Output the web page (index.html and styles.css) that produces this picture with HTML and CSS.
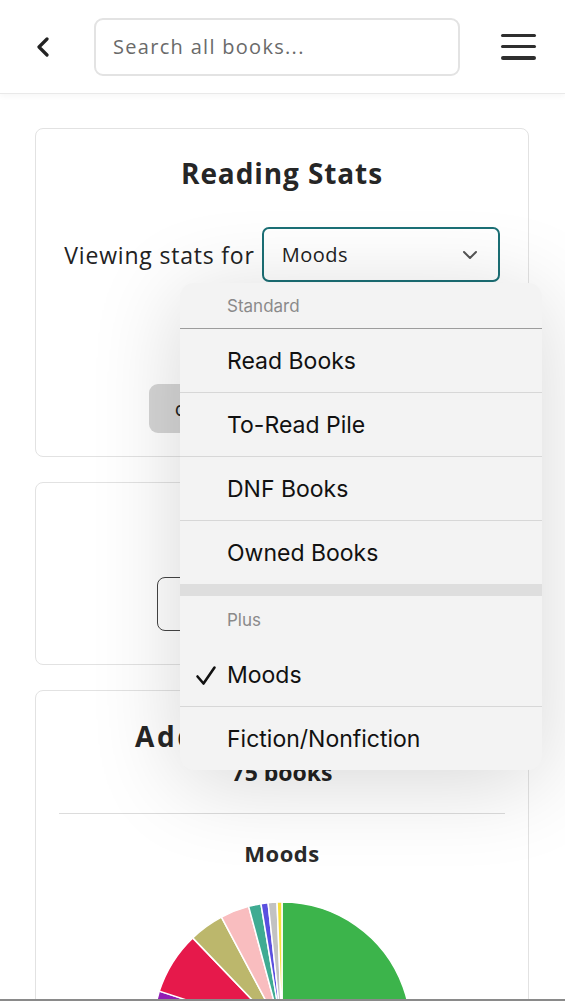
FILE: index.html
```html
<!DOCTYPE html>
<html>
<head>
  <title>Reading Stats</title>
  <link rel="stylesheet" href="styles.css">
</head>
<body>
  <!-- Top bar -->
  <header class="topbar">
    <button class="back-btn" aria-label="Back">
      <svg width="14" height="20" viewBox="0 0 14 20"><path d="M11 2 L3 10 L11 18" fill="none" stroke="#222" stroke-width="3.2" stroke-linecap="round" stroke-linejoin="round"/></svg>
    </button>
    <input type="text" class="search" placeholder="Search all books...">
    <button class="menu-btn" aria-label="Menu">
      <span></span><span></span><span></span>
    </button>
  </header>

  <main class="content">
    <!-- Stats picker -->
    <section class="card card-stats">
      <h1 class="card-title">Reading Stats</h1>
      <div class="viewing-row">
        <span class="viewing-label">Viewing stats for</span>
        <div class="select-box">
          <span>Moods</span>
          <svg width="16" height="10" viewBox="0 0 16 10"><path d="M2 2 L8 8 L14 2" fill="none" stroke="#555" stroke-width="2" stroke-linecap="round" stroke-linejoin="round"/></svg>
        </div>
      </div>
      <button class="gray-btn">compare reading years</button>
    </section>

    <!-- Date range -->
    <section class="card card-range">
      <h2 class="card-subtitle">Date Range</h2>
      <div class="range-box">All time</div>
    </section>

    <!-- Chart -->
    <section class="card card-chart">
      <h2 class="card-title wide">Added Books 2023</h2>
      <p class="book-count">75 books</p>
      <hr class="divider">
      <h3 class="chart-title">Moods</h3>
      <svg class="pie" width="260" height="260" viewBox="0 0 260 260">
        <g stroke="#fff" stroke-width="1.5" stroke-linejoin="round">
          <path d="M130,130 L130,1 A129,129 0 0 1 212.92,228.81 Z" fill="#3cb44b"/>
          <path d="M130,130 L212.92,228.81 A129,129 0 0 1 107.6,257.04 Z" fill="#f58231"/>
          <path d="M130,130 L107.6,257.04 A129,129 0 0 1 31.19,212.92 Z" fill="#42d4f4"/>
          <path d="M130,130 L31.19,212.92 A129,129 0 0 1 1,130 Z" fill="#f032e6"/>
          <path d="M130,130 L1,130 A129,129 0 0 1 7.31,90.14 Z" fill="#911eb4"/>
          <path d="M130,130 L7.31,90.14 A129,129 0 0 1 40.72,36.89 Z" fill="#e6194b"/>
          <path d="M130,130 L40.72,36.89 A129,129 0 0 1 69.44,16.1 Z" fill="#bcb76c"/>
          <path d="M130,130 L69.44,16.1 A129,129 0 0 1 96.61,5.4 Z" fill="#f9bdbf"/>
          <path d="M130,130 L96.61,5.4 A129,129 0 0 1 108.93,2.73 Z" fill="#3fab92"/>
          <path d="M130,130 L108.93,2.73 A129,129 0 0 1 116.07,1.75 Z" fill="#5a4fdf"/>
          <path d="M130,130 L116.07,1.75 A129,129 0 0 1 125.05,1.09 Z" fill="#c2c2c2"/>
          <path d="M130,130 L125.05,1.09 A129,129 0 0 1 130,1 Z" fill="#f7df3a"/>
        </g>
      </svg>
    </section>

    <!-- Native picker popover -->
    <div class="picker">
      <div class="picker-group">Standard</div>
      <div class="picker-item">Read Books</div>
      <div class="picker-item">To-Read Pile</div>
      <div class="picker-item">DNF Books</div>
      <div class="picker-item last">Owned Books</div>
      <div class="picker-gap"></div>
      <div class="picker-group plain">Plus</div>
      <div class="picker-item checked">
        <svg class="check" width="22" height="22" viewBox="0 0 22 22"><path d="M2.5 11.5 L8.5 18.5 L19.5 2.5" fill="none" stroke="#111" stroke-width="2.6" stroke-linecap="round" stroke-linejoin="round"/></svg>
        Moods
      </div>
      <div class="picker-item last">Fiction/Nonfiction</div>
    </div>
  </main>

  <div class="bottom-edge"></div>
</body>
</html>
```

FILE: styles.css
```css
/* Page */
body {
  margin: 0;
  font-family: "Open Sans", Arial, sans-serif;
  color: #222;
  background: #fff;
}

/* Top bar */
.topbar {
  height: 93px;
  display: flex;
  align-items: center;
  padding: 0 29px 0 36px;
  border-bottom: 1px solid #e9e9e9;
  box-shadow: 0 2px 6px rgba(0, 0, 0, 0.04);
}
.back-btn {
  background: none;
  border: none;
  padding: 0;
  width: 14px;
  height: 20px;
  margin-right: 44px;
  cursor: pointer;
}
.search {
  width: 366px;
  height: 58px;
  box-sizing: border-box;
  border: 2px solid #e3e3e3;
  border-radius: 9px;
  padding: 0 17px;
  font-family: "Open Sans", Arial, sans-serif;
  font-size: 20px;
  letter-spacing: 1.3px;
  color: #333;
  outline: none;
}
.search::placeholder {
  color: #6a6a6a;
}
.menu-btn {
  margin-left: auto;
  width: 35px;
  height: 26px;
  padding: 0;
  border: none;
  background: none;
  display: flex;
  flex-direction: column;
  justify-content: space-between;
  cursor: pointer;
}
.menu-btn span {
  display: block;
  height: 3.5px;
  border-radius: 2px;
  background: #2e2e2e;
}

/* Cards */
.content {
  position: relative;
  padding: 34px 36px 0 35px;
  display: flex;
  flex-direction: column;
  gap: 25px;
}
.card {
  border: 1px solid #e2e2e2;
  border-radius: 8px;
  background: #fff;
  display: flex;
  flex-direction: column;
  align-items: center;
}
.card-title {
  margin: 0;
  font-size: 28px;
  font-weight: 700;
  letter-spacing: 0.9px;
  line-height: 34px;
  color: #262626;
  white-space: nowrap;
}
.card-title.wide {
  letter-spacing: 2.6px;
}
.card-stats {
  height: 329px;
  box-sizing: border-box;
  padding-top: 27px;
}
.viewing-row {
  margin-top: 37px;
  display: flex;
  align-items: center;
  gap: 7px;
}
.viewing-label {
  font-size: 23px;
  letter-spacing: 0.8px;
  color: #222;
}
.select-box {
  width: 238px;
  height: 55px;
  box-sizing: border-box;
  border: 2px solid #1b6f75;
  border-radius: 7px;
  padding: 0 20px 0 18px;
  display: flex;
  align-items: center;
  justify-content: space-between;
  font-size: 20px;
  letter-spacing: 0.5px;
}
.gray-btn {
  margin-top: 102px;
  width: 266px;
  height: 49px;
  border: none;
  border-radius: 9px;
  background: #d6d6d6;
  font-family: "Open Sans", Arial, sans-serif;
  font-size: 20px;
  color: #222;
  white-space: nowrap;
}

.card-range {
  height: 183px;
  box-sizing: border-box;
  padding-top: 28px;
}
.card-subtitle {
  margin: 0;
  font-size: 22px;
  font-weight: 700;
}
.range-box {
  margin-top: 36px;
  width: 251px;
  height: 54px;
  box-sizing: border-box;
  border: 1.5px solid #444;
  border-radius: 8px;
  display: flex;
  align-items: center;
  justify-content: center;
  font-size: 18px;
}

.card-chart {
  padding: 28px 23px 0;
  height: 340px;
  overflow: hidden;
}
.book-count {
  margin: 4px 0 0;
  font-size: 23px;
  line-height: 31px;
  font-weight: 700;
  color: #222;
}
.divider {
  width: 100%;
  margin: 25px 0 0;
  border: none;
  border-top: 1px solid #dcdcdc;
}
.chart-title {
  margin: 24px 0 0;
  font-size: 22px;
  line-height: 30px;
  letter-spacing: 0.5px;
  font-weight: 700;
  color: #2a2a2a;
}
.pie {
  margin-top: 33px;
  flex-shrink: 0;
}

/* Picker popover (iOS style) */
.picker {
  position: absolute;
  left: 180px;
  top: 189px;
  width: 362px;
  background: #f3f3f3;
  border-radius: 14px;
  overflow: hidden;
  box-shadow: 0 12px 90px rgba(0, 0, 0, 0.16);
  font-family: Inter, "Liberation Sans", Arial, sans-serif;
}
.picker-group {
  height: 46px;
  box-sizing: border-box;
  padding: 13px 0 0 47px;
  font-size: 17px;
  color: #8a8a8a;
  border-bottom: 1px solid #9c9c9c;
}
.picker-group.plain {
  height: 47px;
  padding-top: 14px;
  border-bottom: none;
}
.picker-item {
  position: relative;
  height: 64px;
  box-sizing: border-box;
  padding-left: 47px;
  display: flex;
  align-items: center;
  font-size: 23px;
  color: #111;
  border-bottom: 1px solid #d7d7d7;
}
.picker-item.last {
  border-bottom: none;
  height: 63px;
}
.picker-gap {
  height: 12px;
  background: #dedede;
}
.check {
  position: absolute;
  left: 15px;
  top: 22px;
}

.bottom-edge {
  position: fixed;
  left: 0;
  right: 0;
  bottom: 0;
  height: 2px;
  background: #8a8a8a;
}
```
